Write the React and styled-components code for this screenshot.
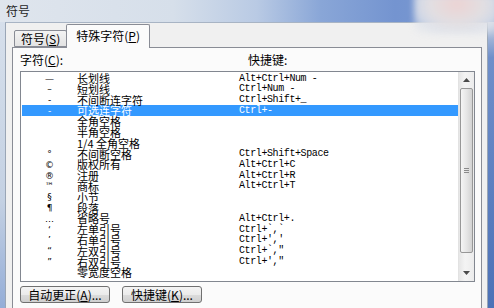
import React from 'react'
import styled, { createGlobalStyle } from 'styled-components'

const GlobalStyle = createGlobalStyle`
  body {
    margin: 0;
    background: #f0f0f0;
    font-family: "Noto Sans CJK SC", "Noto Sans", sans-serif;
  }
`

const rows = [
  { sym: '—', name: '长划线', key: 'Alt+Ctrl+Num -' },
  { sym: '–', name: '短划线', key: 'Ctrl+Num -' },
  { sym: '‑', name: '不间断连字符', key: 'Ctrl+Shift+_' },
  { sym: '-', name: '可选连字符', key: 'Ctrl+-', selected: true },
  { sym: '', name: '全角空格', key: '' },
  { sym: '', name: '半角空格', key: '' },
  { sym: '', name: '1/4 全角空格', key: '' },
  { sym: '°', name: '不间断空格', key: 'Ctrl+Shift+Space' },
  { sym: '©', name: '版权所有', key: 'Alt+Ctrl+C' },
  { sym: '®', name: '注册', key: 'Alt+Ctrl+R' },
  { sym: '™', name: '商标', key: 'Alt+Ctrl+T' },
  { sym: '§', name: '小节', key: '' },
  { sym: '¶', name: '段落', key: '' },
  { sym: '…', name: '省略号', key: 'Alt+Ctrl+.' },
  { sym: '‘', name: '左单引号', key: 'Ctrl+`,`' },
  { sym: '’', name: '右单引号', key: "Ctrl+','" },
  { sym: '“', name: '左双引号', key: 'Ctrl+`,"' },
  { sym: '”', name: '右双引号', key: "Ctrl+',\"" },
  { sym: '', name: '零宽度空格', key: '' },
]

const Arrow = ({ down }) => (
  <svg width="7" height="4" viewBox="0 0 7 4">
    <path d={down ? 'M0 0 H7 L3.5 4 Z' : 'M0 4 H7 L3.5 0 Z'} fill="#4a4a4a" />
  </svg>
)

const App = () => (
  <>
    <GlobalStyle />
    <Window>
      <TitleBar>符号</TitleBar>
      <Glare />
      <Frame>
        <LeftEdge />
        <Client>
          <TabRow>
            <Tab>
              符号(<u>S</u>)
            </Tab>
            <Tab active>
              特殊字符(<u>P</u>)
            </Tab>
          </TabRow>
          <Panel>
            <Labels>
              <Label width="228px">
                字符(<u>C</u>):
              </Label>
              <Label>快捷键:</Label>
            </Labels>
            <ListBox>
              <Rows>
                {rows.map((r) => (
                  <Row key={r.name} selected={r.selected}>
                    <Sym>{r.sym}</Sym>
                    <Name>{r.name}</Name>
                    <Key>{r.key}</Key>
                  </Row>
                ))}
              </Rows>
              <ScrollBar>
                <ArrowBtn>
                  <Arrow />
                </ArrowBtn>
                <Thumb>
                  <Grip />
                  <Grip />
                  <Grip />
                </Thumb>
                <Track />
                <ArrowBtn>
                  <Arrow down />
                </ArrowBtn>
              </ScrollBar>
            </ListBox>
            <Buttons>
              <Button width="90px">
                自动更正(<u>A</u>)...
              </Button>
              <Button width="80px">
                快捷键(<u>K</u>)...
              </Button>
            </Buttons>
          </Panel>
        </Client>
        <RightEdge />
      </Frame>
    </Window>
  </>
)

const Window = styled.div`
  position: relative;
  width: 494px;
  height: 308px;
  overflow: hidden;
  display: flex;
  flex-direction: column;
`

const TitleBar = styled.div`
  height: 22px;
  line-height: 22px;
  padding-left: 6px;
  font-size: 12px;
  color: #1e1e1e;
  background: linear-gradient(
    to right,
    #dfe5ed 0%,
    #d6dfea 35%,
    #b9cae4 52%,
    #89a6d7 65%,
    #7494d0 80%,
    #7d9bd0 100%
  );
`

const Glare = styled.div`
  position: absolute;
  top: -6px;
  right: -6px;
  width: 86px;
  height: 40px;
  background: radial-gradient(
    ellipse at 50% 25%,
    #ecd3d3 0%,
    #e2dfe2 45%,
    rgba(222, 226, 234, 0.85) 70%,
    rgba(222, 226, 234, 0) 100%
  );
  filter: blur(3px);
`

const Frame = styled.div`
  flex: 1;
  display: flex;
`

const LeftEdge = styled.div`
  width: 5px;
  background: linear-gradient(to bottom, #d6dfeb, #c4d1e3 60%, #8fa9d6);
`

const RightEdge = styled.div`
  width: 6px;
  background: linear-gradient(to bottom, #c9d3e2 0, #6f8fca 12%, #4a70b6 100%);
`

const Client = styled.div`
  flex: 1;
  background: #f0f0f0;
  border-left: 1px solid #9aa6b6;
  border-right: 1px solid #9aa6b6;
  border-top: 1px solid #a8b4c4;
  padding: 0 5px 0 6px;
  display: flex;
  flex-direction: column;
`

const TabRow = styled.div`
  margin-top: 1px;
  height: 23px;
  display: flex;
  align-items: flex-end;
  padding-left: 2px;
  position: relative;
  z-index: 1;
`

const Tab = styled.div`
  box-sizing: border-box;
  height: ${(p) => (p.active ? '24px' : '17px')};
  margin-bottom: ${(p) => (p.active ? '-1px' : '0')};
  margin-left: ${(p) => (p.active ? '-1px' : '0')};
  padding: ${(p) => (p.active ? '4px 9px 0 9px' : '1px 6px 0 6px')};
  font-size: 12px;
  line-height: 14px;
  color: #000;
  border: 1px solid #898c95;
  border-bottom: ${(p) => (p.active ? 'none' : '1px solid #898c95')};
  border-radius: 2px 2px 0 0;
  background: ${(p) =>
    p.active ? '#fbfbfb' : 'linear-gradient(to bottom, #f3f3f3, #e3e3e3)'};
`

const Panel = styled.div`
  height: 270px;
  flex-shrink: 0;
  border: 1px solid #898c95;
  background: #fbfbfb;
  padding: 0 6px 0 7px;
  display: flex;
  flex-direction: column;
`

const Labels = styled.div`
  height: 23px;
  display: flex;
  padding-top: 6px;
  box-sizing: border-box;
`

const Label = styled.div`
  width: ${(p) => p.width || 'auto'};
  font-size: 12px;
  line-height: 12px;
  color: #000;
`

const ListBox = styled.div`
  height: 211px;
  box-sizing: border-box;
  border: 1px solid #828790;
  background: #fff;
  display: flex;
`

const Rows = styled.div`
  flex: 1;
  overflow: hidden;
  padding: 1px 0 0 1px;
`

const Row = styled.div`
  height: 10.8px;
  display: grid;
  grid-template-columns: 55px 162px 1fr;
  align-items: center;
  background: ${(p) => (p.selected ? '#3399ff' : 'transparent')};
  color: ${(p) => (p.selected ? '#fff' : '#000')};
`

const Sym = styled.span`
  text-align: center;
  font-family: "DejaVu Sans", sans-serif;
  font-size: 9px;
  line-height: 10px;
`

const Name = styled.span`
  font-size: 11px;
  line-height: 11px;
  white-space: nowrap;
`

const Key = styled.span`
  font-family: "Liberation Mono", monospace;
  font-size: 10px;
  letter-spacing: -0.4px;
  line-height: 10px;
  white-space: pre;
`

const ScrollBar = styled.div`
  width: 15px;
  display: flex;
  flex-direction: column;
  background: linear-gradient(to right, #e6e6e6, #f4f4f4 40%, #ececec);
  border-left: 1px solid #e2e2e2;
`

const ArrowBtn = styled.div`
  height: 16px;
  display: flex;
  align-items: center;
  justify-content: center;
`

const Thumb = styled.div`
  height: 165px;
  margin: 0 1px;
  box-sizing: border-box;
  border: 1px solid #979797;
  border-radius: 2px;
  background: linear-gradient(to right, #f5f5f5, #e4e4e4 55%, #d2d2d2);
  display: flex;
  flex-direction: column;
  align-items: center;
  justify-content: center;
  gap: 1px;
`

const Grip = styled.div`
  width: 5px;
  height: 1px;
  background: #8a8a8a;
`

const Track = styled.div`
  flex: 1;
`

const Buttons = styled.div`
  display: flex;
  gap: 12px;
  margin-top: 4px;
`

const Button = styled.div`
  width: ${(p) => p.width};
  height: 17px;
  box-sizing: border-box;
  border: 1px solid #707070;
  border-radius: 3px;
  background: linear-gradient(to bottom, #f4f4f4, #ebebeb 50%, #dcdcdc 51%, #cfcfcf);
  font-size: 12px;
  line-height: 15px;
  text-align: center;
  color: #000;
  white-space: nowrap;
`

export default App
